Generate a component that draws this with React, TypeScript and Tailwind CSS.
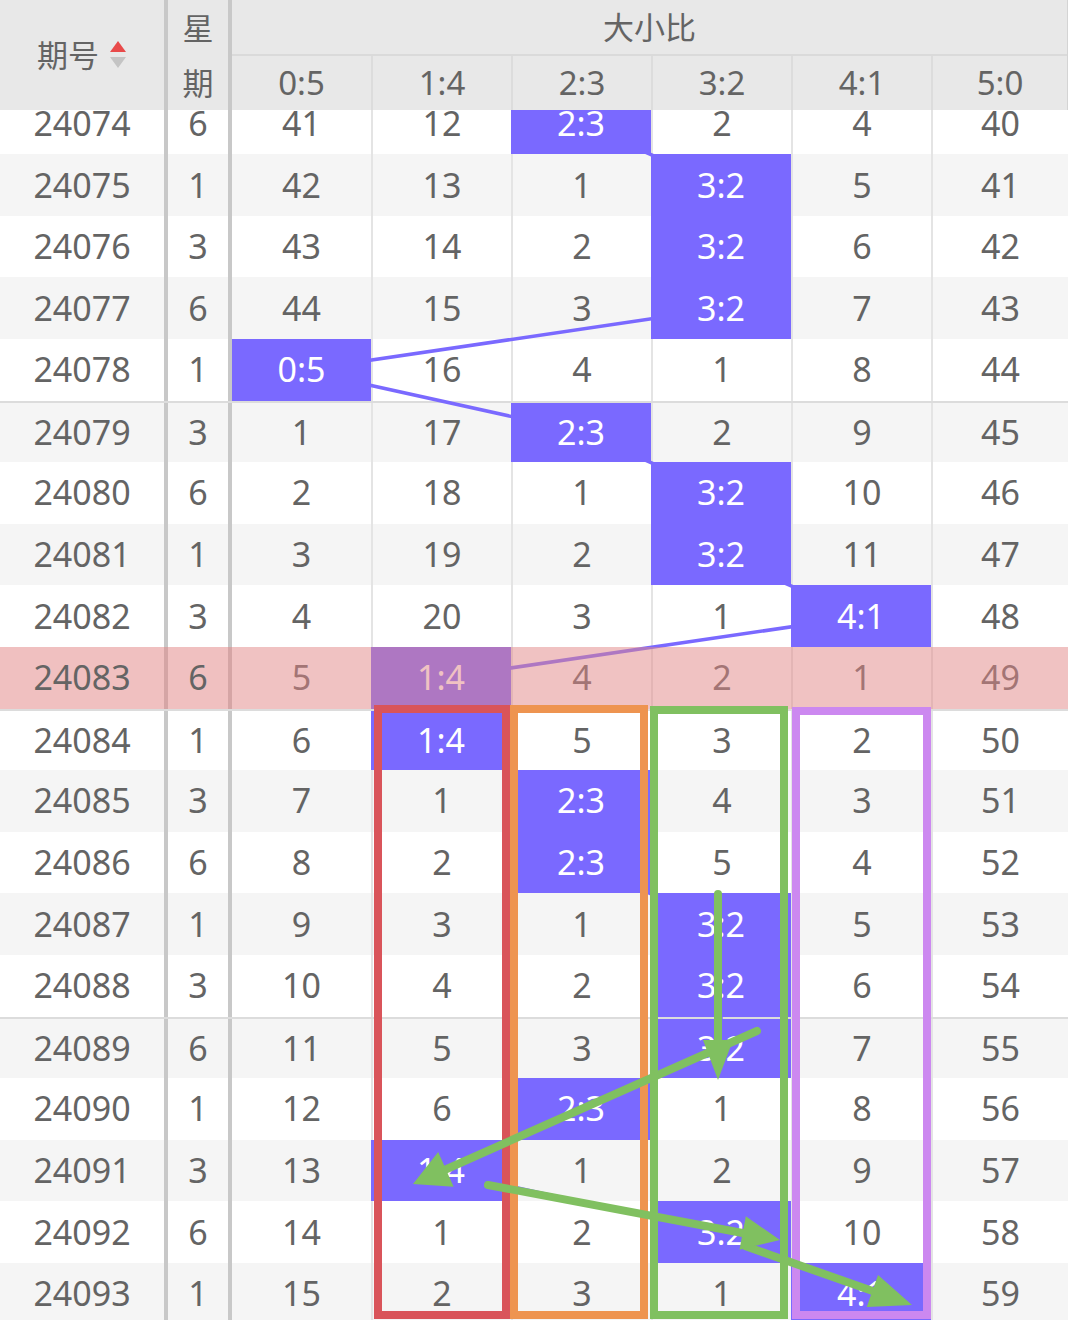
import React from 'react';

const COLS = ['0:5', '1:4', '2:3', '3:2', '4:1', '5:0'];
const COL_X = [232, 371, 511, 651, 791, 931];
const COL_W = ['w-[139px]', 'w-[140px]', 'w-[140px]', 'w-[140px]', 'w-[140px]', 'w-[137px]'];
const ROW_H = 61.6;
const PURPLE = '#7a69ff';
const GREEN = '#80c060';

// issue, weekday, hit column
const draws: [number, number, number][] = [
  [24074, 6, 2],
  [24075, 1, 3],
  [24076, 3, 3],
  [24077, 6, 3],
  [24078, 1, 0],
  [24079, 3, 2],
  [24080, 6, 3],
  [24081, 1, 3],
  [24082, 3, 4],
  [24083, 6, 1],
  [24084, 1, 1],
  [24085, 3, 2],
  [24086, 6, 2],
  [24087, 1, 3],
  [24088, 3, 3],
  [24089, 6, 3],
  [24090, 1, 2],
  [24091, 3, 1],
  [24092, 6, 3],
  [24093, 1, 4],
];

const rows = (() => {
  const miss = [40, 11, 0, 1, 3, 39];
  return draws.map(([issue, week, hit]) => ({
    issue,
    week,
    hit,
    cells: COLS.map((label, c) => {
      if (c === hit) {
        miss[c] = 0;
        return label;
      }
      miss[c] += 1;
      return String(miss[c]);
    }),
  }));
})();

const CURRENT = 24083;

function Arrow({ x1, y1, x2, y2, len = 38, w = 34 }: { x1: number; y1: number; x2: number; y2: number; len?: number; w?: number }) {
  const d = Math.hypot(x2 - x1, y2 - y1);
  const ux = (x2 - x1) / d;
  const uy = (y2 - y1) / d;
  const bx = x2 - ux * len;
  const by = y2 - uy * len;
  const nx = -uy * (w / 2);
  const ny = ux * (w / 2);
  return (
    <g>
      <line x1={x1} y1={y1} x2={bx + ux * 4} y2={by + uy * 4} stroke={GREEN} strokeWidth={8} strokeLinecap="round" />
      <polygon points={`${x2},${y2} ${bx + nx},${by + ny} ${bx - nx},${by - ny}`} fill={GREEN} />
    </g>
  );
}

function SortIcon() {
  return (
    <svg width="18" height="30" viewBox="0 0 18 30" className="ml-[10px]">
      <polygon points="9,1 17,12 1,12" fill="#e84a4a" />
      <polygon points="1,17 17,17 9,28" fill="#c4c4c4" />
    </svg>
  );
}

export default function App() {
  const centers = rows.map((r, i) => `${COL_X[r.hit] + (r.hit === 5 ? 68 : 70)},${ROW_H / 2 + i * ROW_H}`).join(' ');

  return (
    <div
      className="relative w-[1068px] h-[1320px] overflow-hidden bg-white text-[#646464]"
      style={{ fontFamily: '"Noto Sans", "Noto Sans CJK SC", sans-serif' }}
    >
      {/* header */}
      <div className="relative z-30 grid grid-cols-[168px_64px_139px_140px_140px_140px_140px_136px_1fr] grid-rows-[56px_54px] bg-[#e8e8e8] text-[33px]">
        <div className="row-span-2 flex items-center justify-center border-r-4 border-[#c8c8c8]">
          <span className="text-[31px]">期号</span>
          <SortIcon />
        </div>
        <div className="row-span-2 flex flex-col border-r-4 border-[#c8c8c8] text-[31px]">
          <div className="h-[56px] flex items-center justify-center">星</div>
          <div className="h-[54px] flex items-center justify-center">期</div>
        </div>
        <div className="col-span-6 flex items-center justify-center border-b-2 border-[#dadada] text-[31px]">大小比</div>
        <div className="row-span-2 border-l-2 border-[#d4d4d4]" />
        {COLS.map((c, i) => (
          <div key={c} className={`flex items-center justify-center ${i > 0 ? 'border-l-2 border-[#dcdcdc]' : ''}`}>
            {c}
          </div>
        ))}
      </div>

      {/* body */}
      <div className="relative -mt-[17.4px] text-[34px]">
        {rows.map((r, i) => {
          const current = r.issue === CURRENT;
          const sep = i % 5 === 0 && i > 0;
          const bg = current || i % 2 === 0 ? 'bg-white' : 'bg-[#f5f5f5]';
          const fixed = current ? 'bg-[#f0c0c0] border-[#d5a5a5]' : 'border-[#c8c8c8]';
          return (
            <div key={r.issue} className={`relative flex h-[61.6px] ${bg} ${sep ? 'border-t-2 border-[#dcdcdc]' : ''}`}>
              <div className={`w-[168px] flex items-center justify-center border-r-4 ${fixed}`}>{r.issue}</div>
              <div className={`w-[64px] flex items-center justify-center border-r-4 ${fixed}`}>{r.week}</div>
              {r.cells.map((v, c) =>
                c === r.hit ? (
                  <div
                    key={c}
                    className={`relative z-10 ${COL_W[c]} flex items-center justify-center bg-[#7a69ff] text-white`}
                  >
                    {v}
                  </div>
                ) : (
                  <div
                    key={c}
                    className={`${COL_W[c]} flex items-center justify-center ${c > 0 ? 'border-l-2 border-[#e4e4e4]' : ''}`}
                  >
                    {v}
                  </div>
                )
              )}
              {current && <div className="absolute left-[232px] right-0 inset-y-0 z-20 bg-[rgba(226,133,133,0.5)]" />}
            </div>
          );
        })}
        {/* trend line, under the hit cells */}
        <svg className="absolute inset-0 z-0 pointer-events-none" width="1068" height="1240">
          <polyline points={centers} fill="none" stroke={PURPLE} strokeWidth={3.5} />
        </svg>
      </div>

      {/* annotations */}
      <svg className="absolute inset-0 z-40 pointer-events-none" width="1068" height="1320" viewBox="0 0 1068 1320">
        <rect x={378} y={709} width={128} height={606} fill="none" stroke="#d9545a" strokeWidth={8} />
        <rect x={514} y={709} width={130} height={606} fill="none" stroke="#ee9450" strokeWidth={8} />
        <rect x={654} y={710} width={130} height={605} fill="none" stroke={GREEN} strokeWidth={8} />
        <rect x={796} y={711} width={131} height={604} fill="none" stroke="#cc88f0" strokeWidth={8} />
        <Arrow x1={718} y1={894} x2={718} y2={1080} len={40} w={30} />
        <Arrow x1={757} y1={1031} x2={413} y2={1184} len={36} w={38} />
        <Arrow x1={488} y1={1185} x2={780} y2={1240} len={38} w={34} />
        <Arrow x1={745} y1={1246} x2={912} y2={1305} len={42} w={34} />
      </svg>
    </div>
  );
}
